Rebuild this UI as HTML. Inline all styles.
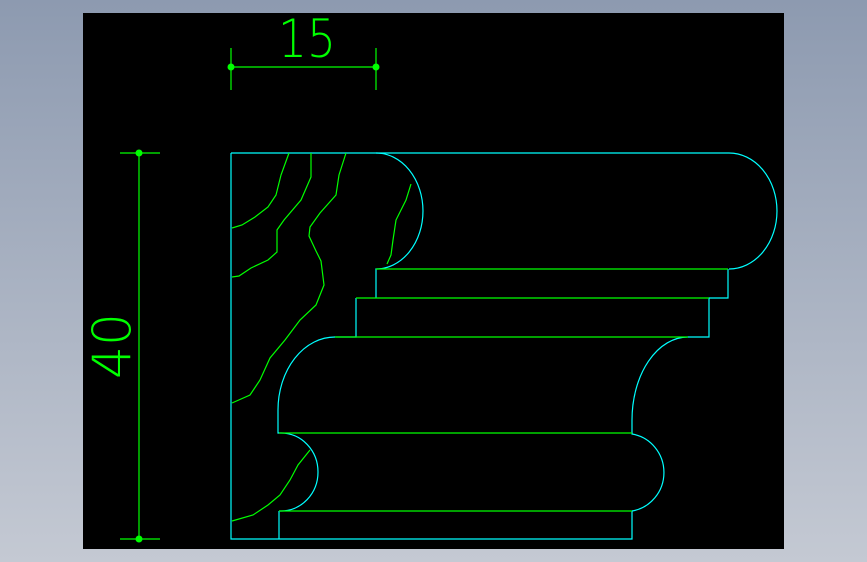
<!DOCTYPE html>
<html><head><style>
html,body{margin:0;padding:0}
body{width:867px;height:562px;background:linear-gradient(#8d9ab0,#c4c9d3);position:relative;overflow:hidden}
svg{position:absolute;left:0;top:0}
</style></head><body>
<svg width="867" height="562" viewBox="0 0 867 562">
<rect x="83" y="13" width="701" height="536" fill="#000"/>
<g fill="none" stroke-width="1.2">
<g stroke="#00ffff">
<path d="M231,153 H729 A48,58 0 0 1 729,269"/>
<path d="M231,153 V539 H632 V511"/>
<path d="M279,539 V511"/>
<path d="M376,153 A47,58 0 0 1 376,269 V298"/>
<path d="M356,298 V337 H335 A57,73 0 0 0 278,410 V433 H281 A37,39 0 0 1 281,511 H279"/>
<path d="M728,269 V298 H709 V337 H688 A56,83 0 0 0 632,420 V434 A38,39 0 0 1 632,511"/>
</g>
<g stroke="#00ff00">
<path d="M376,269 H728 M356,298 H709 M335,337 H688 M279,433 H632 M279,511 H632"/>
<polyline points="289,153 281,175 276,195 268,207 255,217 242,225 232,228"/>
<polyline points="311,153 311,177 301,200 284,220 277,230 277,252 268,260 251,268 239,276 232,277"/>
<polyline points="346,153 339,175 336,195 320,213 310,227 309,236 316,251 321,261 324,285 316,305 300,320 285,340 270,358 260,380 250,395 232,403"/>
<polyline points="411,184 406,200 396,220 393,240 391,255 387,264"/>
<polyline points="310,450 298,465 290,480 280,495 268,505 253,515 232,521"/>
<path d="M231,67 H376 M231,48 V90 M376,48 V90"/>
<path d="M139,153 V539 M120,153 H160 M120,539 H160"/>
</g>
</g>
<g fill="#00ff00">
<circle cx="231" cy="67" r="3.5"/><circle cx="376" cy="67" r="3.5"/>
<circle cx="139" cy="153" r="3.5"/><circle cx="139" cy="539" r="3.5"/>
</g>
<text x="307" y="57" text-anchor="middle" font-family="DejaVu Sans, sans-serif" font-weight="200" font-size="53" fill="#00ff00" textLength="58" lengthAdjust="spacingAndGlyphs">15</text>
<text transform="translate(130,346) rotate(-90)" text-anchor="middle" font-family="DejaVu Sans, sans-serif" font-weight="200" font-size="53" fill="#00ff00" textLength="66" lengthAdjust="spacingAndGlyphs">40</text>
</svg>
</body></html>
